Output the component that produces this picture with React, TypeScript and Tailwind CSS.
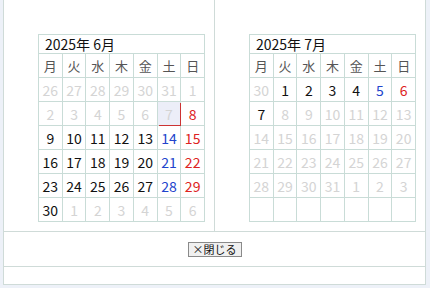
import * as React from "react";

type Day = { n?: number; tone: "dim" | "black" | "blue" | "red"; today?: boolean };

const WEEK = ["月", "火", "水", "木", "金", "土", "日"];

const toneClass: Record<Day["tone"], string> = {
  dim: "text-[#d4d4d4]",
  black: "text-[#111111]",
  blue: "text-[#2244cc]",
  red: "text-[#dd2222]",
};

function range(from: number, to: number, tone: Day["tone"]): Day[] {
  const out: Day[] = [];
  for (let i = from; i <= to; i++) out.push({ n: i, tone });
  return out;
}

// color by weekday for the active days (Mon-first: index 5 = Sat, 6 = Sun)
function week(days: Day[]): Day[] {
  return days.map((d, i) => {
    if (d.tone !== "black") return d;
    if (i === 5) return { ...d, tone: "blue" };
    if (i === 6) return { ...d, tone: "red" };
    return d;
  });
}

const june: Day[] = [
  ...range(26, 31, "dim"),
  { n: 1, tone: "dim" },
  ...range(2, 6, "dim"),
  { n: 7, tone: "dim", today: true },
  { n: 8, tone: "red" },
  ...week(range(9, 15, "black")),
  ...week(range(16, 22, "black")),
  ...week(range(23, 29, "black")),
  { n: 30, tone: "black" },
  ...range(1, 6, "dim"),
];

const july: Day[] = [
  { n: 30, tone: "dim" },
  ...week([{ tone: "black" } as Day, ...range(1, 6, "black")]).slice(1),
  { n: 7, tone: "black" },
  ...range(8, 13, "dim"),
  ...range(14, 20, "dim"),
  ...range(21, 27, "dim"),
  ...range(28, 31, "dim"),
  ...range(1, 3, "dim"),
  ...Array.from({ length: 7 }, () => ({ tone: "dim" as const })),
];

function Calendar({ title, days }: { title: string; days: Day[] }) {
  return (
    <div className="flex w-[167px] flex-col gap-px border border-[#c9dcd7] bg-[#c9dcd7]">
      <div className="flex h-[18px] items-center bg-white pl-[6px] text-[14px] leading-none text-[#111]">
        {title}
      </div>
      <div className="grid grid-cols-7 gap-px">
        {WEEK.map((w) => (
          <div
            key={w}
            className="flex h-[23px] items-center justify-center bg-white text-[13px] text-[#555]"
          >
            {w}
          </div>
        ))}
        {days.map((d, i) => (
          <div
            key={i}
            className={
              "relative flex h-[23px] items-center justify-center text-[14px] leading-none " +
              toneClass[d.tone] +
              (d.today ? " z-10 bg-[#eceef8] shadow-[1px_1px_0_#cc3333]" : " bg-white")
            }
          >
            {d.n}
          </div>
        ))}
      </div>
    </div>
  );
}

export default function App() {
  return (
    <div
      className="h-[288px] w-[430px] bg-[#edf1f8] pb-[3px] pl-[3px] pr-[4px]"
      style={{ fontFamily: '"Noto Sans CJK JP", "Noto Sans", sans-serif' }}
    >
      <div className="flex h-full flex-col border-b border-l border-r border-[#cfdbd8] bg-white">
        <div className="flex h-[232px] border-b border-[#cfdbd8]">
          <div className="w-[211px] border-r border-[#cfdbd8] pl-[34px] pt-[34px]">
            <Calendar title="2025年 6月" days={june} />
          </div>
          <div className="flex-1 pl-[34px] pt-[34px]">
            <Calendar title="2025年 7月" days={july} />
          </div>
        </div>
        <div className="flex h-[35px] items-center justify-center border-b border-[#cfdbd8]">
          <button className="h-[15px] border border-[#8a8a8a] bg-[#f0f0f0] px-[4px] text-[11px] leading-[13px] text-[#111]">
            ×閉じる
          </button>
        </div>
        <div className="flex-1" />
      </div>
    </div>
  );
}
